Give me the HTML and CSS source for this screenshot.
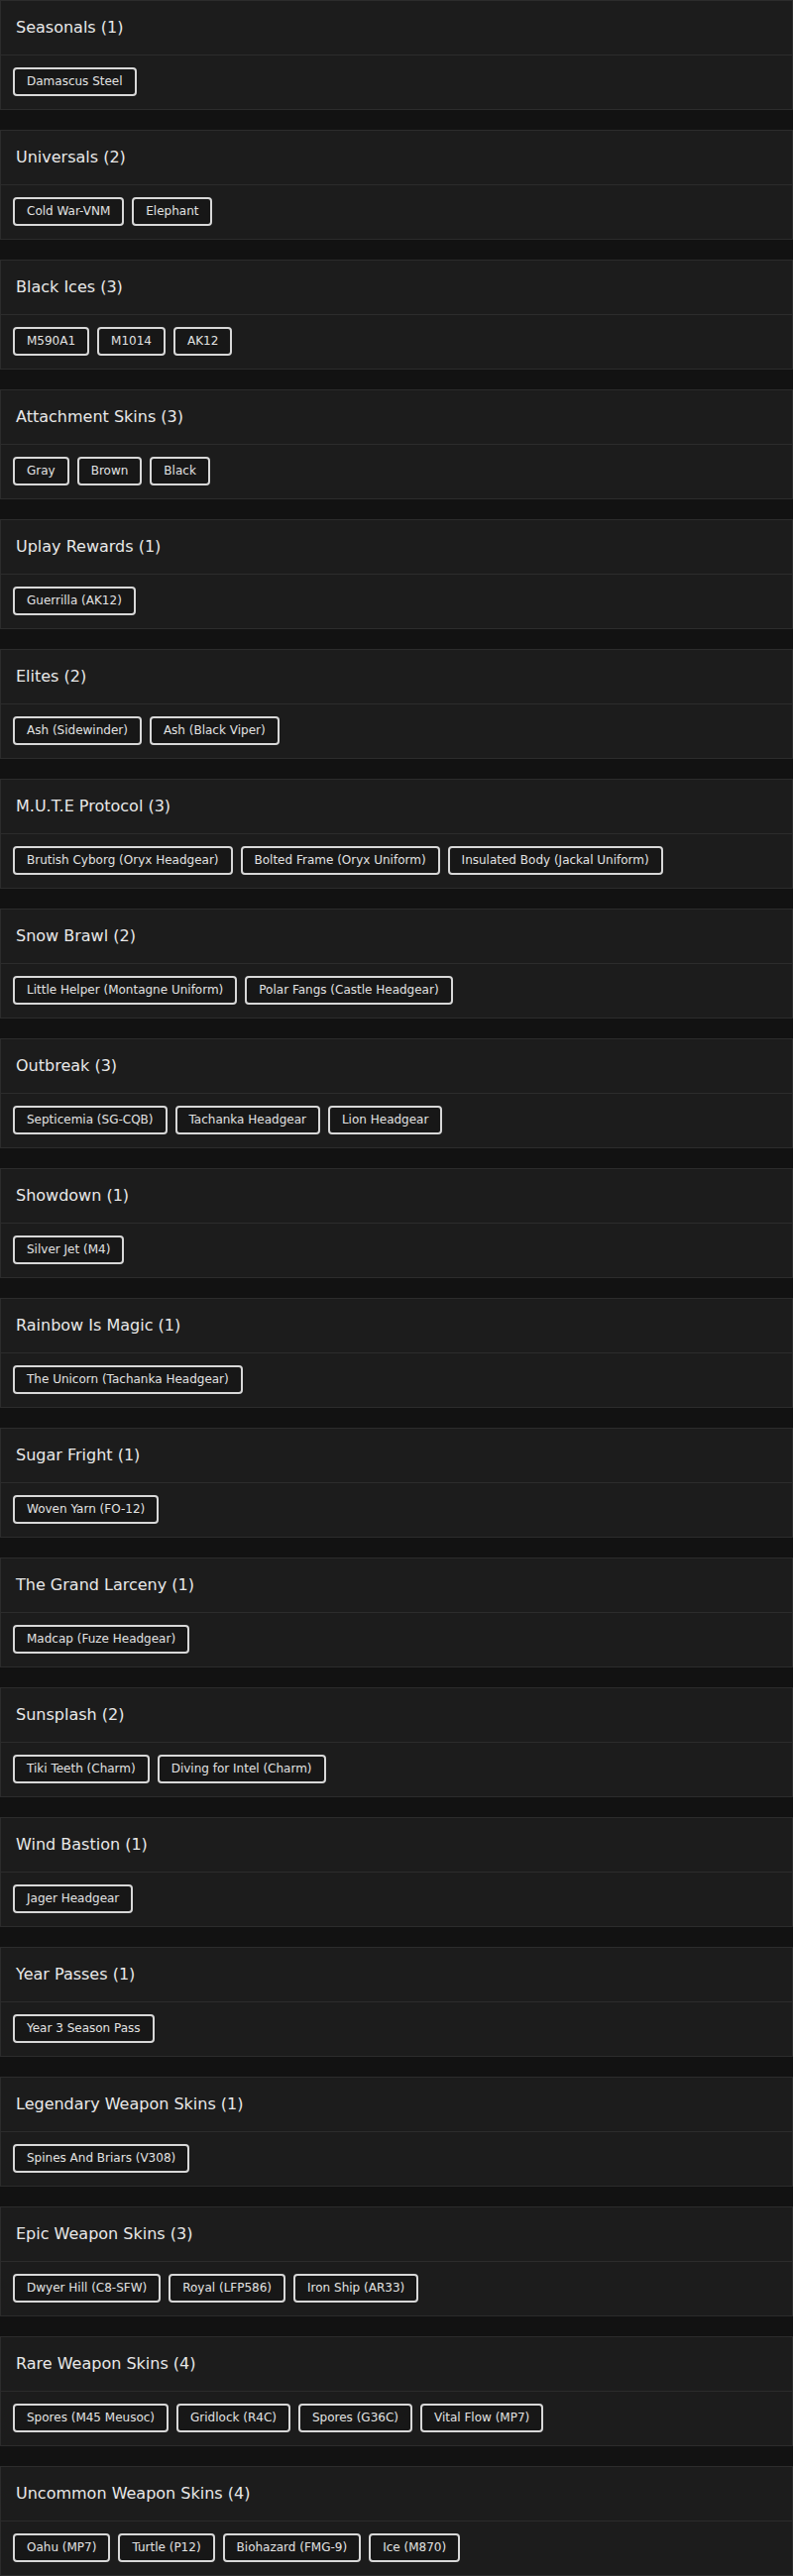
FILE: index.html
```html
<!DOCTYPE html>
<html>
<head>
<meta charset="utf-8">
<link rel="stylesheet" href="styles.css">
</head>
<body>
<div class="list">
  <section class="card"><h2 class="card-title">Seasonals (1)</h2><div class="chips"><span class="chip">Damascus Steel</span></div></section>
  <section class="card"><h2 class="card-title">Universals (2)</h2><div class="chips"><span class="chip">Cold War-VNM</span><span class="chip">Elephant</span></div></section>
  <section class="card"><h2 class="card-title">Black Ices (3)</h2><div class="chips"><span class="chip">M590A1</span><span class="chip">M1014</span><span class="chip">AK12</span></div></section>
  <section class="card"><h2 class="card-title">Attachment Skins (3)</h2><div class="chips"><span class="chip">Gray</span><span class="chip">Brown</span><span class="chip">Black</span></div></section>
  <section class="card"><h2 class="card-title">Uplay Rewards (1)</h2><div class="chips"><span class="chip">Guerrilla (AK12)</span></div></section>
  <section class="card"><h2 class="card-title">Elites (2)</h2><div class="chips"><span class="chip">Ash (Sidewinder)</span><span class="chip">Ash (Black Viper)</span></div></section>
  <section class="card"><h2 class="card-title">M.U.T.E Protocol (3)</h2><div class="chips"><span class="chip">Brutish Cyborg (Oryx Headgear)</span><span class="chip">Bolted Frame (Oryx Uniform)</span><span class="chip">Insulated Body (Jackal Uniform)</span></div></section>
  <section class="card"><h2 class="card-title">Snow Brawl (2)</h2><div class="chips"><span class="chip">Little Helper (Montagne Uniform)</span><span class="chip">Polar Fangs (Castle Headgear)</span></div></section>
  <section class="card"><h2 class="card-title">Outbreak (3)</h2><div class="chips"><span class="chip">Septicemia (SG-CQB)</span><span class="chip">Tachanka Headgear</span><span class="chip">Lion Headgear</span></div></section>
  <section class="card"><h2 class="card-title">Showdown (1)</h2><div class="chips"><span class="chip">Silver Jet (M4)</span></div></section>
  <section class="card"><h2 class="card-title">Rainbow Is Magic (1)</h2><div class="chips"><span class="chip">The Unicorn (Tachanka Headgear)</span></div></section>
  <section class="card"><h2 class="card-title">Sugar Fright (1)</h2><div class="chips"><span class="chip">Woven Yarn (FO-12)</span></div></section>
  <section class="card"><h2 class="card-title">The Grand Larceny (1)</h2><div class="chips"><span class="chip">Madcap (Fuze Headgear)</span></div></section>
  <section class="card"><h2 class="card-title">Sunsplash (2)</h2><div class="chips"><span class="chip">Tiki Teeth (Charm)</span><span class="chip">Diving for Intel (Charm)</span></div></section>
  <section class="card"><h2 class="card-title">Wind Bastion (1)</h2><div class="chips"><span class="chip">Jager Headgear</span></div></section>
  <section class="card"><h2 class="card-title">Year Passes (1)</h2><div class="chips"><span class="chip">Year 3 Season Pass</span></div></section>
  <section class="card"><h2 class="card-title">Legendary Weapon Skins (1)</h2><div class="chips"><span class="chip">Spines And Briars (V308)</span></div></section>
  <section class="card"><h2 class="card-title">Epic Weapon Skins (3)</h2><div class="chips"><span class="chip">Dwyer Hill (C8-SFW)</span><span class="chip">Royal (LFP586)</span><span class="chip">Iron Ship (AR33)</span></div></section>
  <section class="card"><h2 class="card-title">Rare Weapon Skins (4)</h2><div class="chips"><span class="chip">Spores (M45 Meusoc)</span><span class="chip">Gridlock (R4C)</span><span class="chip">Spores (G36C)</span><span class="chip">Vital Flow (MP7)</span></div></section>
  <section class="card"><h2 class="card-title">Uncommon Weapon Skins (4)</h2><div class="chips"><span class="chip">Oahu (MP7)</span><span class="chip">Turtle (P12)</span><span class="chip">Biohazard (FMG-9)</span><span class="chip">Ice (M870)</span></div></section>
</div>
</body>
</html>
```
FILE: styles.css
```css
html, body {
  margin: 0;
  padding: 0;
  background: #121212;
}
body {
  font-family: "DejaVu Sans", "Liberation Sans", sans-serif;
  color: #e4e4e4;
}
.list {
  display: flex;
  flex-direction: column;
  gap: 20px;
}
.card {
  background: #1c1c1c;
  border: 1px solid #2c2c2c;
}
.card-title {
  margin: 0;
  padding: 15px 15px;
  font-size: 16px;
  font-weight: normal;
  line-height: 24px;
  color: #e8e8e8;
  border-bottom: 1px solid #2c2c2c;
}
.chips {
  display: flex;
  flex-wrap: wrap;
  gap: 8px;
  padding: 12px 12px 13px;
}
.chip {
  display: inline-block;
  border: 2px solid #d8d8d8;
  border-radius: 4px;
  background: #171717;
  padding: 5px 12px;
  font-size: 12px;
  line-height: 15px;
  color: #e2e2e2;
}
```
